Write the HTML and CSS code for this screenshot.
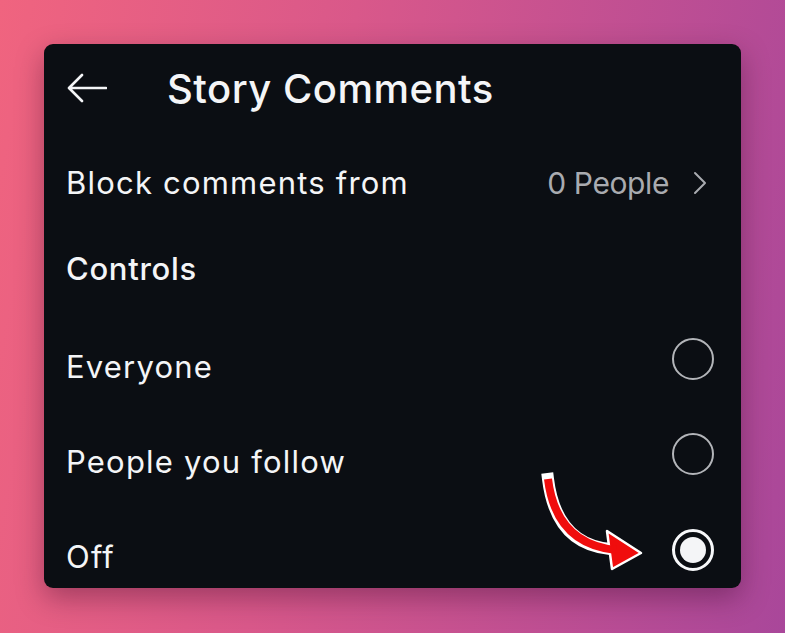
FILE: index.html
```html
<!DOCTYPE html>
<html lang="en">
<head>
<meta charset="UTF-8">
<meta name="viewport" content="width=device-width, initial-scale=1.0">
<title>Story Comments</title>
<link rel="stylesheet" href="styles.css">
</head>
<body>
<div class="card">
  <div class="header">
    <svg class="back" width="40" height="30" viewBox="0 0 40 30">
      <path d="M39 15H3M15 2L2 15l13 13" fill="none" stroke="#f4f5f7" stroke-width="2.6" stroke-linecap="round" stroke-linejoin="round"/>
    </svg>
    <h1>Story Comments</h1>
  </div>

  <div class="row block-row">
    <span class="label">Block comments from</span>
    <span class="value">0 People</span>
    <svg class="chevron" width="14" height="24" viewBox="0 0 14 24">
      <path d="M2 2l10 10L2 22" fill="none" stroke="#a9abb0" stroke-width="2" stroke-linecap="round" stroke-linejoin="round"/>
    </svg>
  </div>

  <div class="row section">Controls</div>

  <div class="options">
    <div class="row option">
      <span class="label">Everyone</span>
      <span class="radio"></span>
    </div>
    <div class="row option">
      <span class="label">People you follow</span>
      <span class="radio"></span>
    </div>
    <div class="row option">
      <span class="label">Off</span>
      <span class="radio on"></span>
    </div>
  </div>

  <!-- annotation arrow -->
  <svg class="pointer" width="120" height="110" viewBox="0 0 120 110">
    <path d="M14 10Q22 75 76 80" fill="none" stroke="#fff" stroke-width="12" stroke-linecap="square"/>
    <polygon points="73,62 107,84 78,100" fill="#f00d0d" stroke="#fff" stroke-width="2.5" stroke-linejoin="round"/>
    <path d="M14 10Q22 75 82 81" fill="none" stroke="#f00d0d" stroke-width="8"/>
  </svg>
</div>
</body>
</html>
```

FILE: styles.css
```css
* {
  box-sizing: border-box;
}
body {
  margin: 0;
  padding: 44px;
  min-height: 633px;
  background: linear-gradient(100deg, #f0647f 0%, #d9588a 40%, #a9479a 100%);
  font-family: "Inter", "Liberation Sans", sans-serif;
  color: #f4f5f7;
}
.card {
  position: relative;
  width: 697px;
  height: 544px;
  overflow: hidden;
  background-color: #0b0e13;
  border-radius: 9px;
  box-shadow: 0 10px 28px rgba(40, 0, 30, 0.35);
  padding: 0 27px 0 22px;
}
.header {
  display: flex;
  align-items: center;
  height: 88px;
}
.back {
  margin-left: 1px;
}
h1 {
  margin: 0 0 0 60px;
  font-size: 40px;
  font-weight: 500;
  letter-spacing: 0.5px;
}
.row {
  display: flex;
  align-items: center;
  font-size: 31px;
  letter-spacing: 1.2px;
}
.block-row {
  height: 101px;
}
.block-row .label {
  flex: 1;
}
.value {
  color: #a9abb0;
  font-size: 30px;
  letter-spacing: -0.4px;
}
.chevron {
  margin: 0 7px 0 24px;
}
.section {
  height: 70px;
  font-weight: 500;
  letter-spacing: 0.7px;
}
.options {
  padding-top: 16px;
}
.option {
  height: 95px;
  justify-content: space-between;
}
.radio {
  width: 42px;
  height: 42px;
  margin-bottom: 16px;
  border: 2.5px solid #b3b5b9;
  border-radius: 50%;
  display: flex;
  align-items: center;
  justify-content: center;
}
.radio.on {
  border: 3px solid #f7f8fa;
  margin-bottom: 14px;
}
.radio.on::after {
  content: "";
  width: 26px;
  height: 26px;
  border-radius: 50%;
  background-color: #f4f5f7;
}
.pointer {
  position: absolute;
  left: 490px;
  top: 425px;
}
```
